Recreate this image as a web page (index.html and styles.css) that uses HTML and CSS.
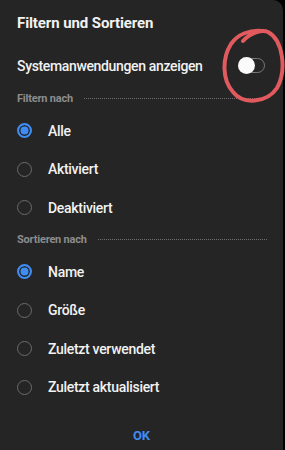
FILE: index.html
```html
<!DOCTYPE html>
<html lang="de">
<head>
    <meta charset="UTF-8">
    <meta name="viewport" content="width=device-width, initial-scale=1.0">
    <title>Filtern und Sortieren</title>
    <link rel="stylesheet" href="styles.css">
</head>
<body>
    <div class="dialog">
        <h1 class="title">Filtern und Sortieren</h1>

        <div class="toggle-row">
            <span>Systemanwendungen anzeigen</span>
            <span class="switch"><span class="knob"></span></span>
            <!-- red marker someone drew on the screenshot -->
            <svg class="scribble" width="70" height="85" viewBox="218 24 70 85">
                <path d="M243 41 C250 33 262 29 268 32 C283 40 287 70 277 88 C267 103 243 105 233 92 C222 80 222 58 231 44 C238 34 250 30 262 31" fill="none" stroke="#e05a5e" stroke-width="4" stroke-linecap="round"/>
            </svg>
        </div>

        <div class="section-label"><span>Filtern nach</span><span class="dots"></span></div>
        <div class="option"><span class="radio checked"></span>Alle</div>
        <div class="option"><span class="radio"></span>Aktiviert</div>
        <div class="option"><span class="radio"></span>Deaktiviert</div>

        <div class="section-label"><span>Sortieren nach</span><span class="dots"></span></div>
        <div class="option"><span class="radio checked"></span>Name</div>
        <div class="option"><span class="radio"></span>Größe</div>
        <div class="option"><span class="radio"></span>Zuletzt verwendet</div>
        <div class="option"><span class="radio"></span>Zuletzt aktualisiert</div>

        <div class="actions"><span class="ok">OK</span></div>
    </div>
</body>
</html>
```

FILE: styles.css
```css
:root {
    --bg: #252525;
    --text: #f2f2f2;
    --muted: #8c8c8c;
    --blue: #3f8cf5;
    --ring: #6b6b6b;
}

* {
    box-sizing: border-box;
    margin: 0;
    padding: 0;
}

body {
    background: #000;
    font-family: Roboto, "Noto Sans", sans-serif;
    color: var(--text);
    width: 285px;
    height: 450px;
    overflow: hidden;
}

.dialog {
    position: relative;
    width: 283px;
    height: 450px;
    background: var(--bg);
    border-top-right-radius: 10px;
    padding: 0 17px;
}

.title {
    height: 45px;
    font-size: 15px;
    font-weight: 700;
    letter-spacing: -0.1px;
    display: flex;
    align-items: center;
    padding-top: 1px;
}

.toggle-row {
    position: relative;
    height: 41px;
    display: flex;
    align-items: center;
    justify-content: space-between;
    font-size: 14px;
    font-weight: 500;
    letter-spacing: -0.35px;
}

.switch {
    position: relative;
    width: 26px;
    height: 15px;
    border: 1.5px solid #7a7a7a;
    border-radius: 8px;
    margin-right: 1px;
}

.knob {
    position: absolute;
    left: -2px;
    top: -2.5px;
    width: 17px;
    height: 17px;
    border-radius: 50%;
    background: #fafafa;
}

.scribble {
    position: absolute;
    left: 201px;
    top: -21px;
}

.section-label {
    height: 25.5px;
    display: flex;
    align-items: center;
    gap: 11px;
    font-size: 11px;
    font-weight: 700;
    letter-spacing: -0.2px;
    color: var(--muted);
}

.dots {
    flex: 1;
    border-top: 1px dotted #6e6e6e;
    margin-right: -1px;
}

.option {
    height: 38.5px;
    display: flex;
    align-items: center;
    gap: 16px;
    font-size: 14px;
    font-weight: 500;
    letter-spacing: -0.3px;
}

.radio {
    width: 15px;
    height: 15px;
    border: 1.5px solid var(--ring);
    border-radius: 50%;
    flex-shrink: 0;
}

.radio.checked {
    border: 2px solid var(--blue);
    background: var(--blue);
    box-shadow: inset 0 0 0 1.5px var(--bg);
}

.actions {
    height: 57px;
    display: flex;
    align-items: center;
    justify-content: center;
}

.ok {
    color: var(--blue);
    font-size: 13px;
    font-weight: 700;
}
```
